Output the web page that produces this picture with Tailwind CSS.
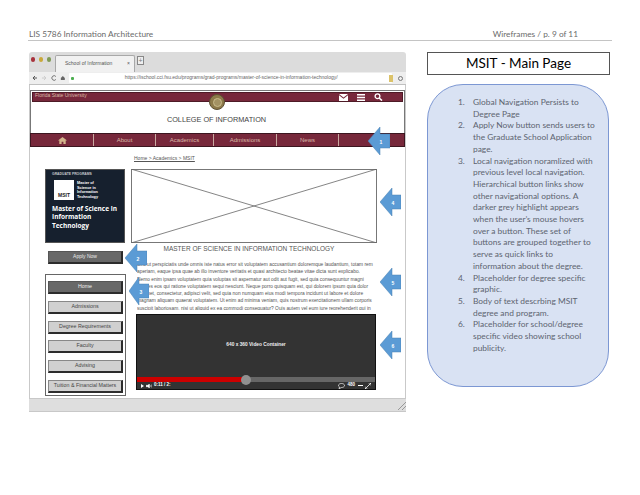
<!DOCTYPE html>
<html lang="en">
<head>
  <meta charset="UTF-8">
  <title>MSIT - Main Page</title>
  <script src="https://cdn.jsdelivr.net/npm/@tailwindcss/browser@4"></script>
</head>
<body class="bg-white overflow-hidden">
  <div class="relative w-[640px] h-[495px] font-['Lato',sans-serif]">
    <!-- page header -->
    <header class="ml-[28px] w-[584px] h-[41px] pt-[28px] pr-[34px] border-b border-[#c4c4c4] flex justify-between text-[8.300px] leading-[12px] text-[#6b6b6b]">
      <span class="pl-[1px]">LIS 5786 Information Architecture</span>
      <span>Wireframes / p. 9 of 11</span>
    </header>

    <div class="flex ml-[29px] mt-[11px] gap-[21px]">
      <!-- browser -->
      <div class="relative w-[377px] h-[360px] flex flex-col rounded-t-[3px] bg-white font-['Liberation_Sans',sans-serif]">
        <div class="h-[20px] bg-[#dcdcdc] rounded-t-[3px] flex items-end pl-[2px]">
          <div class="flex gap-[4px] self-start mt-[5px] mr-[4px]">
            <span class="w-[4px] h-[5px] rounded-full bg-[#a8323c]"></span>
            <span class="w-[4px] h-[5px] rounded-full bg-[#c9a83a]"></span>
            <span class="w-[4px] h-[5px] rounded-full bg-[#7f9a55]"></span>
          </div>
          <div class="w-[80px] h-[17px] bg-[#f1f1f1] border border-b-0 border-[#a8a8a8] rounded-t-[2px] flex items-center justify-between pl-[9px] pr-[4px] text-[5px] text-[#555]">
            <span>School of Information</span><span>×</span>
          </div>
          <div class="w-[7px] h-[9px] ml-[2px] mb-[7px] border border-[#888] bg-[#eee] flex items-center justify-center text-[7px] leading-none text-[#777]">+</div>
        </div>
        <div class="h-[13px] bg-[#eeeeee] border-b border-[#c0c0c0] flex items-center pl-[3px] pr-[3px] text-[#555]">
          <svg width="35" height="8" viewBox="0 0 35 8" class="mr-[2px]">
            <path d="M5 4H1M3 2 1 4l2 2" fill="none" stroke="#555" stroke-width="1"/>
            <path d="M10 4h4M12 2l2 2-2 2" fill="none" stroke="#ccc" stroke-width="1"/>
            <path d="M24 2.500A2.300 2.300 0 1 0 24 5.500" fill="none" stroke="#666" stroke-width=".9"/>
            <path d="M29 4l2-2 2 2v2h-4z" fill="#666"/>
          </svg>
          <div class="w-[325px] h-[10px] bg-white rounded-[1px] flex items-center pl-[2px]">
            <span class="w-[3px] h-[3px] bg-[#4caf50] rounded-[1px]"></span>
            <span class="ml-[51px] text-[5px] text-[#666] whitespace-nowrap">https://ischool.cci.fsu.edu/programs/grad-programs/master-of-science-in-information-technology/</span>
          </div>
          <span class="ml-[-3px] w-[4px] h-[7px] bg-[#dcc36a]"></span>
          <span class="ml-[5px] w-[5px] h-[5px] rounded-full border-[1.500px] border-[#777]"></span>
        </div>

        <!-- site content -->
        <div class="h-[313px] border-l border-r border-[#c9c9c9] flex flex-col">
          <div class="relative mt-[5px] h-[43px] border-x border-t border-[#777] pt-[1px] px-[1px]">
            <div class="h-[10px] bg-[#77283b] border border-[#4d1a26] flex items-center justify-between pl-[2px] pr-[19px] text-[5px] text-[#d7b9a6]">
              <span class="-mt-[3px]">Florida State University</span>
              <div class="flex items-center gap-[9px]">
                <svg width="9" height="7" viewBox="0 0 9 7"><path d="M0 0h9L4.500 3.500zM0 1.200v5.800h9V1.200L4.500 4.700z" fill="#fff"/></svg>
                <svg width="8" height="7" viewBox="0 0 8 7"><path d="M0 0h8v1.400H0zM0 2.800h8v1.400H0zM0 5.600h8V7H0z" fill="#fff"/></svg>
                <svg width="9" height="8" viewBox="0 0 9 8"><circle cx="3.500" cy="3.200" r="2.400" fill="none" stroke="#fff" stroke-width="1.300"/><path d="M5.200 5 8 7.600" stroke="#fff" stroke-width="1.500"/></svg>
              </div>
            </div>
            <span class="absolute left-[178px] top-[3px] w-[16px] h-[16px] rounded-full bg-[#8d7a4a] border border-[#5c5034] flex items-center justify-center"><span class="w-[9px] h-[9px] rounded-full border border-[#c9bb8c] bg-[#a39263]"></span></span>
            <p class="mt-[13px] text-center text-[7.300px] leading-[9px] text-[#444] pr-[2px]">COLLEGE OF INFORMATION</p>
          </div>
          <nav class="h-[14px] bg-[#77283b] border border-[#3c1620] flex items-center text-[6px] text-[#d9b9a8]">
            <div class="w-[63px] h-full border-r border-[#c9a9a0] flex items-center justify-center">
              <svg width="9" height="7" viewBox="0 0 9 7"><path d="M4.500 0 9 3.500H7.700V7H5.400V4.700H3.600V7H1.300V3.500H0z" fill="#d3b58c"/></svg>
            </div>
            <div class="w-[62px] h-full border-r border-[#c9a9a0] flex items-center justify-center">About</div>
            <div class="w-[58px] h-full border-r border-[#c9a9a0] flex items-center justify-center">Academics</div>
            <div class="w-[63px] h-full border-r border-[#c9a9a0] flex items-center justify-center">Admissions</div>
            <div class="w-[62px] h-full border-r border-[#c9a9a0] flex items-center justify-center">News</div>
          </nav>

          <p class="ml-[104px] mt-[8px] h-[7px] text-[5px] leading-[7px] underline text-[#555]">Home &gt; Academics &gt; MSIT</p>

          <div class="flex mt-[7px] ml-[15px]">
            <!-- left column -->
            <div class="w-[86px] shrink-0">
              <div class="w-[80px] h-[74px] bg-[#16202e] border border-[#555] px-[6px] pt-[2px] text-white">
                <p class="text-[3.400px] leading-[5px] font-bold text-[#c5c8cc]">GRADUATE PROGRAMS</p>
                <div class="flex gap-[3px] mt-[3px] ml-[2px]">
                  <div class="w-[20px] h-[20px] bg-white flex items-end justify-center pb-[2px] text-[#222] text-[5px] leading-none font-bold">MSIT</div>
                  <p class="text-[3.800px] leading-[4.600px] font-bold mt-[1px]">Master of<br>Science in<br>Information<br>Technology</p>
                </div>
                <p class="mt-[5px] text-[6.500px] leading-[8.300px] font-bold font-['Open_Sans',sans-serif] whitespace-nowrap">Master of Science in<br>Information<br>Technology</p>
              </div>
              <div class="mt-[8px] ml-[3px] w-[75px] h-[13px] bg-[#686868] border-y border-l border-[#555] border-r-2 border-r-[#2c2c2c] border-b-2 border-b-[#2c2c2c] flex items-center justify-center text-[5px] text-[#e8e8e8]">Apply Now</div>
              <div class="mt-[10px] w-[81px] h-[122px] border border-[#666] pt-[6px] pl-[2px] flex flex-col gap-[6.800px] text-[5.300px] text-[#444]">
                <div class="w-[75px] h-[13px] shrink-0 bg-[#686868] border border-[#555] border-r-2 border-b-2 border-r-[#2c2c2c] border-b-[#2c2c2c] flex items-center justify-center text-[#eee]">Home</div>
                <div class="w-[75px] h-[13px] shrink-0 bg-[#d0d0d0] border border-[#888] border-r-2 border-b-2 border-r-[#2c2c2c] border-b-[#2c2c2c] flex items-center justify-center">Admissions</div>
                <div class="w-[75px] h-[13px] shrink-0 bg-[#d0d0d0] border border-[#888] border-r-2 border-b-2 border-r-[#2c2c2c] border-b-[#2c2c2c] flex items-center justify-center">Degree Requirements</div>
                <div class="w-[75px] h-[13px] shrink-0 bg-[#d0d0d0] border border-[#888] border-r-2 border-b-2 border-r-[#2c2c2c] border-b-[#2c2c2c] flex items-center justify-center">Faculty</div>
                <div class="w-[75px] h-[13px] shrink-0 bg-[#d0d0d0] border border-[#888] border-r-2 border-b-2 border-r-[#2c2c2c] border-b-[#2c2c2c] flex items-center justify-center">Advising</div>
                <div class="w-[75px] h-[13px] shrink-0 bg-[#d0d0d0] border border-[#888] border-r-2 border-b-2 border-r-[#2c2c2c] border-b-[#2c2c2c] flex items-center justify-center whitespace-nowrap">Tuition &amp; Financial Matters</div>
              </div>
            </div>

            <!-- main column -->
            <div class="w-[246px] shrink-0">
              <svg width="246" height="74" viewBox="0 0 246 74" class="block">
                <rect x=".5" y=".5" width="245" height="73" fill="#fff" stroke="#777"/>
                <path d="M0 0 246 74M246 0 0 74" stroke="#666" stroke-width=".8"/>
              </svg>
              <p class="h-[18px] text-center text-[6.500px] leading-[12px] text-[#555] pr-[10px]">MASTER OF SCIENCE IN INFORMATION TECHNOLOGY</p>
              <p class="ml-[6px] w-[239px] h-[49px] overflow-hidden text-[4.850px] leading-[7.300px] text-[#555] whitespace-nowrap">Sed ut perspiciatis unde omnis iste natus error sit voluptatem accusantium doloremque laudantium, totam rem<br>aperiam, eaque ipsa quae ab illo inventore veritatis et quasi architecto beatae vitae dicta sunt explicabo.<br>Nemo enim ipsam voluptatem quia voluptas sit aspernatur aut odit aut fugit, sed quia consequuntur magni<br>dolores eos qui ratione voluptatem sequi nesciunt. Neque porro quisquam est, qui dolorem ipsum quia dolor<br>sit amet, consectetur, adipisci velit, sed quia non numquam eius modi tempora incidunt ut labore et dolore<br>magnam aliquam quaerat voluptatem. Ut enim ad minima veniam, quis nostrum exercitationem ullam corporis<br>suscipit laboriosam, nisi ut aliquid ex ea commodi consequatur? Quis autem vel eum iure reprehenderit qui in<br>ea voluptate velit esse quam nihil molestiae consequatur, vel illum qui dolorem eum fugiat quo voluptas nulla</p>
              <!-- video -->
              <div class="relative ml-[5px] mt-[4px] w-[240px] h-[76px] bg-[#333333] border border-[#111] flex flex-col">
                <div class="flex-1 flex items-center justify-center text-[4.800px] font-bold text-[#eee] pb-[3px]">640 x 360 Video Container</div>
                <div class="h-[5px] bg-[#666] flex"><div class="w-[106px] bg-[#cc0000]"></div></div>
                <div class="h-[7px] flex items-center justify-between px-[4px] text-[4.500px] font-bold text-white">
                  <div class="flex items-center gap-[2px]">
                    <svg width="3" height="4" viewBox="0 0 3 4"><path d="M0 0l3 2-3 2z" fill="#fff"/></svg>
                    <svg width="6" height="4" viewBox="0 0 6 4"><path d="M0 1.300h1.500L3.500 0v4L1.500 2.700H0zM4.300 1v2M5.500.5v3" fill="#fff" stroke="#fff" stroke-width=".4"/></svg>
                    <span>0:11 / 2:</span>
                  </div>
                  <div class="flex items-center gap-[2px]">
                    <svg width="7" height="6" viewBox="0 0 7 6"><path d="M3.500.5C5.200.5 6.500 1.300 6.500 2.500S5.200 4.500 3.500 4.500L1 5.700 1.500 4C.8 3.600.5 3.100.5 2.500.5 1.300 1.800.5 3.500.5z" fill="none" stroke="#fff" stroke-width=".7"/></svg>
                    <span>480</span>
                    <span class="w-[5px] h-[1px] bg-white ml-[1px]"></span>
                    <svg width="6" height="6" viewBox="0 0 6 6"><path d="M0 6l6-6M0 3.500V6h2.500M3.500 0H6v2.500" fill="none" stroke="#fff" stroke-width=".8"/></svg>
                  </div>
                </div>
                <span class="absolute left-[104px] top-[60px] w-[10px] h-[10px] rounded-full bg-[#909090]"></span>
              </div>
            </div>
          </div>
        </div>

        <!-- status bar -->
        <div class="relative h-[14px] bg-[#dedede] border-y border-[#c8c8c8]">
          <svg width="9" height="9" viewBox="0 0 9 9" class="absolute right-[0px] bottom-[1px]"><path d="M1 9 9 1M5 9l4-4" stroke="#999" stroke-width="1"/></svg>
        </div>

        <!-- callouts -->
        <svg width="22" height="28" viewBox="0 0 22 28" class="absolute left-[339px] top-[75px]"><path d="M12 0v7h10v14H12v7L0 14z" fill="#5b9bd5" stroke="#4a80b0" stroke-width=".5"/><text x="13" y="16.500" font-size="5" fill="#fff" text-anchor="middle" font-weight="bold">1</text></svg>
        <svg width="22" height="28" viewBox="0 0 22 28" class="absolute left-[96px] top-[192px]"><path d="M12 0v7h10v14H12v7L0 14z" fill="#5b9bd5" stroke="#4a80b0" stroke-width=".5"/><text x="13" y="16.500" font-size="5" fill="#fff" text-anchor="middle" font-weight="bold">2</text></svg>
        <svg width="20" height="28" viewBox="0 0 20 28" class="absolute left-[100px] top-[225px]"><path d="M10 0v7h10v14H10v7L0 14z" fill="#5b9bd5" stroke="#4a80b0" stroke-width=".5"/><text x="12" y="16.500" font-size="5" fill="#fff" text-anchor="middle" font-weight="bold">3</text></svg>
        <svg width="21" height="28" viewBox="0 0 21 28" class="absolute left-[351px] top-[136px]"><path d="M12 0v7h9v14h-9v7L0 14z" fill="#5b9bd5" stroke="#4a80b0" stroke-width=".5"/><text x="13" y="16.500" font-size="5" fill="#fff" text-anchor="middle" font-weight="bold">4</text></svg>
        <svg width="21" height="28" viewBox="0 0 21 28" class="absolute left-[351px] top-[216px]"><path d="M12 0v7h9v14h-9v7L0 14z" fill="#5b9bd5" stroke="#4a80b0" stroke-width=".5"/><text x="13" y="16.500" font-size="5" fill="#fff" text-anchor="middle" font-weight="bold">5</text></svg>
        <svg width="21" height="28" viewBox="0 0 21 28" class="absolute left-[351px] top-[279px]"><path d="M12 0v7h9v14h-9v7L0 14z" fill="#5b9bd5" stroke="#4a80b0" stroke-width=".5"/><text x="13" y="16.500" font-size="5" fill="#fff" text-anchor="middle" font-weight="bold">6</text></svg>
      </div>

      <!-- notes -->
      <div class="w-[183px] shrink-0">
        <h1 class="h-[23px] border border-[#555] flex items-center justify-center text-[13.500px] text-black">MSIT - Main Page</h1>
        <div class="mt-[9px] w-[182px] h-[303px] rounded-[36px] bg-[#d9e2f3] border border-[#7c97d3] pt-[12px] text-[8.400px] leading-[11.700px] text-[#5d6470]">
          <ol class="pl-[30px] pr-[12px]">
            <li class="flex"><span class="w-[15px] shrink-0">1.</span><span>Global Navigation Persists to Degree Page</span></li>
            <li class="flex"><span class="w-[15px] shrink-0">2.</span><span>Apply Now button sends users to the Graduate School Application page.</span></li>
            <li class="flex"><span class="w-[15px] shrink-0">3.</span><span>Local navigation noramlized with previous level local navigation. Hierarchical button links show other navigational options. A darker grey highlight appears when the user’s mouse hovers over a button. These set of buttons are grouped together to serve as quick links to information about the degree.</span></li>
            <li class="flex"><span class="w-[15px] shrink-0">4.</span><span>Placeholder for degree specific graphic.</span></li>
            <li class="flex"><span class="w-[15px] shrink-0">5.</span><span>Body of text descrbing MSIT degree and program.</span></li>
            <li class="flex"><span class="w-[15px] shrink-0">6.</span><span>Placeholder for school/degree specific video showing school publicity.</span></li>
          </ol>
        </div>
      </div>
    </div>
  </div>
</body>
</html>
